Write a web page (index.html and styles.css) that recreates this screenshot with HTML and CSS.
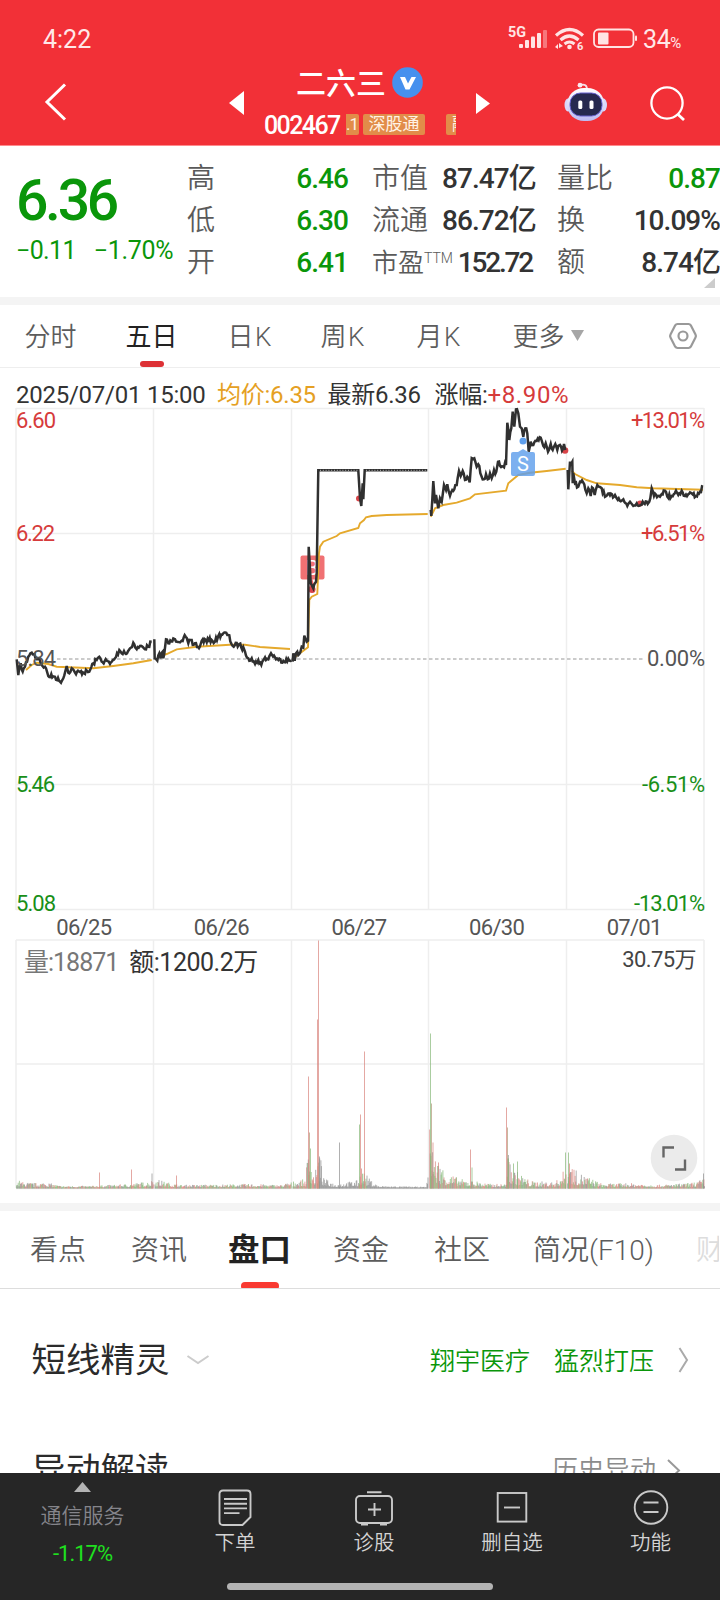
FILE: index.html
```html
<!DOCTYPE html>
<html lang="zh-CN">
<head>
<meta charset="utf-8">
<title>二六三 002467</title>
<link rel="stylesheet" href="styles.css">
</head>
<body>
<div class="screen">
  <header class="header">
    <div class="status">
      <span class="time">4:22</span>
      <svg class="status-icons" width="140" height="30" viewBox="500 24 140 30" fill="#ffe4e4">
        <text x="508" y="37" font-size="14" font-weight="700" textLength="18" lengthAdjust="spacingAndGlyphs">5G</text>
        <rect x="519" y="44" width="4" height="4" rx="1"/><rect x="525" y="40" width="4" height="8" rx="1"/><rect x="531" y="36.500" width="4" height="11.500" rx="1"/><rect x="537" y="33" width="4" height="15" rx="1"/><rect x="543" y="30" width="4" height="18" rx="1" opacity=".4"/>
        <g fill="none" stroke="#ffe4e4" stroke-width="3.200"><path d="M556 35.500Q569.500 23.500 583 35.500"/><path d="M560.500 40Q569.500 32 578.500 40"/><path d="M564.500 44Q569.500 40 574.500 44" stroke-width="3"/></g>
        <circle cx="569.500" cy="47" r="2.300"/>
        <path d="M555 47l3-3v5zM559 43v5l4-2z"/>
        <text x="577" y="50" font-size="11" font-weight="700">6</text>
        <rect x="594" y="29.500" width="39.500" height="17.500" rx="4.500" fill="none" stroke="#ffe4e4" stroke-width="1.800"/>
        <rect x="598" y="32.500" width="10.500" height="12" rx="1"/><rect x="635" y="35.500" width="2" height="5.500" rx="1"/>
      </svg>
      <span class="battery">34<small>%</small></span>
    </div>
    <div class="titlebar">
      <svg class="back" width="24" height="40" viewBox="0 0 24 40"><path d="M21 2.500L3 20l18 17.500" fill="none" stroke="#fff" stroke-width="3"/></svg>
      <svg class="prev" width="15" height="24" viewBox="0 0 15 24"><path d="M15 0v24L0 12z" fill="#fff"/></svg>
      <div class="title">
        <div class="name">二六三
          <svg width="31" height="31" viewBox="0 0 31 31"><circle cx="15.500" cy="15.500" r="15.300" fill="#4690ee"/><path d="M8 10h5l3 6.500 3.500-6.500h4.500l-6.500 12.500h-4z" fill="#fff"/></svg>
        </div>
        <div class="code"><b>002467</b><span class="tags"><i class="tag tag-first">.1</i><i class="tag tag-mid">深股通</i><i class="tag tag-last">融</i></span></div>
      </div>
      <svg class="next" width="14" height="21" viewBox="0 0 14 21"><path d="M0 0v21l14-10.500z" fill="#fff"/></svg>
      <svg class="robot" width="44" height="40" viewBox="0 0 44 40">
        <defs><linearGradient id="shell" x1="0" y1="0" x2="0" y2="1"><stop offset="0" stop-color="#fff"/><stop offset="1" stop-color="#bcbaf2"/></linearGradient></defs>
        <path d="M16 3c5-1 7 0 7 5" fill="none" stroke="#f6dfe8" stroke-width="1.800"/><circle cx="16" cy="3.200" r="2.400" fill="#fbe9ef"/>
        <ellipse cx="4" cy="23" rx="3.500" ry="6.500" fill="#d9d8fb"/><ellipse cx="39.500" cy="23" rx="3.500" ry="6.500" fill="#d9d8fb"/>
        <rect x="3" y="6" width="37.500" height="33" rx="17" fill="url(#shell)"/>
        <rect x="6" y="11" width="32" height="23" rx="10.500" fill="#26294f" stroke="#6560cf" stroke-width="1"/>
        <rect x="14.300" y="18.500" width="4" height="8.500" rx="1.500" fill="#fff"/><rect x="25.500" y="18.500" width="4" height="8.500" rx="1.500" fill="#fff"/>
      </svg>
      <svg class="search" width="36" height="36" viewBox="0 0 36 36" fill="none" stroke="#fff" stroke-width="2.300"><circle cx="17" cy="17" r="15.600"/><path d="M27.500 28l6.500 6" stroke-width="2.800"/></svg>
    </div>
  </header>

  <section class="quote">
    <div class="last">
      <div class="price">6.36</div>
      <div class="change"><span>−0.11</span><span>−1.70%</span></div>
    </div>
    <dl class="stats">
      <dt>高</dt><dd class="down">6.46</dd><dt>市值</dt><dd>87.47亿</dd><dt>量比</dt><dd class="down">0.87</dd>
      <dt>低</dt><dd class="down">6.30</dd><dt>流通</dt><dd>86.72亿</dd><dt>换</dt><dd>10.09%</dd>
      <dt>开</dt><dd class="down">6.41</dd><dt class="pe">市盈<sup>TTM</sup></dt><dd class="tight">152.72</dd><dt>额</dt><dd>8.74亿</dd>
    </dl>
    <svg class="corner" width="11" height="10"><path d="M11 0v10H0z" fill="#ccc"/></svg>
  </section>

  <nav class="periods">
    <span>分时</span><span class="on">五日</span><span>日K</span><span>周K</span><span>月K</span>
    <span>更多<svg class="caret" width="13" height="11"><path d="M0 0h13L6.500 11z" fill="#a6a6a6"/></svg></span>
    <svg width="30" height="28" viewBox="0 0 30 28" fill="none" stroke="#999" stroke-width="2.200"><path d="M9.500 2h11q1.500 0 2.300 1.300l4.700 9.200q.8 1.500 0 3l-4.700 9.200q-.8 1.300-2.300 1.300h-11q-1.500 0-2.300-1.300l-4.700-9.200q-.8-1.500 0-3l4.700-9.200q.8-1.300 2.300-1.300z"/><circle cx="15" cy="14" r="4.500"/></svg>
  </nav>

  <section class="chart">
    <div class="legend"><span>2025/07/01 15:00</span><span class="avg">均价:6.35</span><span>最新6.36</span><span>涨幅:<em>+8.90%</em></span></div>
    <svg class="plot" width="720" height="506" viewBox="0 406 720 506">
      <path class="grid" d="M16 408.500H704M16 533.500H704M16 784.500H704M16 909.500H704M16 408V910M153.500 408V910M291.500 408V910M428.500 408V910M566.500 408V910M704 408V910"/>
      <path d="M57 659H645" stroke="#bbb" stroke-width="1.500" stroke-dasharray="3.500 2.500"/>
      <rect x="300.500" y="555.500" width="24" height="24" rx="2" fill="#ee6264" opacity=".9"/>
      <text class="mark" x="306" y="575">B</text>
      <path d="M309 588l3-10 3 10z" fill="#ee6264"/>
      <g fill="#d94449"><circle cx="312" cy="589.500" r="3.500"/><circle cx="359" cy="498.500" r="3"/><circle cx="565" cy="450.500" r="3.300"/><circle cx="640" cy="503.500" r="3"/></g>
      <g id="average"></g>
      <g id="price"></g>
      <path d="M320 470.300H358M366 470.300H427" stroke="#bbb" stroke-width="1" stroke-dasharray="1 1.800"/>
      <circle cx="523" cy="441" r="3.500" fill="#5f9fec"/>
      <path d="M513 452h5l5-3 5 3h5q2 0 2 2v20q0 2-2 2h-20q-2 0-2-2v-20q0-2 2-2z" fill="#5f9fec" opacity=".82"/>
      <text class="mark" x="523" y="471" text-anchor="middle">S</text>
      <g class="axis">
        <g fill="#d63b3b"><text x="16" y="428" textLength="40">6.60</text><text x="16" y="540.500" textLength="39">6.22</text><text x="631" y="428" textLength="74">+13.01%</text><text x="641" y="540.500" textLength="64">+6.51%</text></g>
        <g fill="#555"><text x="16" y="666" textLength="40">5.84</text><text x="647" y="666" textLength="58">0.00%</text></g>
        <g fill="#188f18"><text x="16" y="791.500" textLength="39">5.46</text><text x="16" y="911" textLength="40">5.08</text><text x="642" y="791.500" textLength="63">-6.51%</text><text x="634" y="911" textLength="71">-13.01%</text></g>
      </g>
    </svg>
    <div class="dates"><span>06/25</span><span>06/26</span><span>06/27</span><span>06/30</span><span>07/01</span></div>
    <div class="volume">
      <svg width="720" height="252" viewBox="0 938 720 252">
        <path class="grid" d="M16 940H704M16 1064H704M16 1188.500H704M16 940V1188M153.500 940V1188M291.500 940V1188M428.500 940V1188M566.500 940V1188M704 940V1188"/>
        <g id="bars"></g>
      </svg>
      <div class="volume-legend"><span class="dim">量:18871</span><span>额:1200.2万</span><small>30.75万</small></div>
      <svg class="expand" width="48" height="48" viewBox="0 0 48 48"><circle cx="24" cy="24" r="23.300" fill="#ebebeb"/><path d="M13.500 23.500V13.500H24M35 25.500v10H25" fill="none" stroke="#666" stroke-width="2.400"/></svg>
    </div>
  </section>

  <nav class="sections">
    <span>看点</span><span>资讯</span><span class="on">盘口</span><span>资金</span><span>社区</span><span>简况(F10)</span><span class="faded">财</span>
  </nav>

  <section class="row wizard">
    <h2>短线精灵</h2>
    <svg class="fold" width="24" height="12" viewBox="0 0 24 12"><path d="M1.500 2L12 9 22.500 2" fill="none" stroke="#ccc" stroke-width="2"/></svg>
    <span class="alert">翔宇医疗</span><span class="alert">猛烈打压</span>
    <svg class="go" width="11" height="26" viewBox="0 0 11 26"><path d="M1.500 1L9 13 1.500 25" fill="none" stroke="#aaa" stroke-width="2"/></svg>
  </section>
  <section class="row moves">
    <h2>异动解读</h2><span class="history">历史异动</span>
    <svg width="14" height="24" viewBox="0 0 14 24"><path d="M1 1l11 10.500L1 22" fill="none" stroke="#999" stroke-width="2"/></svg>
  </section>

  <footer class="bottom">
    <div class="items">
      <div class="sector"><svg width="17" height="10"><path d="M0 10L8.500 0 17 10z" fill="#b3b3b3"/></svg><span>通信服务</span><b>-1.17%</b></div>
      <div class="item"><svg width="40" height="40" viewBox="0 0 40 40"><path d="M8 3.500h24q3.500 0 3.500 3.500v23l-8 8H8q-3.500 0-3.500-3.500V7q0-3.500 3.500-3.500z"/><path d="M9 12h23M9 16.700h23M9 21.400h23M9 26.100h15.500"/></svg><span>下单</span></div>
      <div class="item"><svg width="40" height="40" viewBox="0 0 40 40"><rect x="2" y="9" width="36" height="27" rx="4"/><path d="M13 5.200h14.500M20.500 16v13M14 22.500h13M7 37.500h7M26 37.500h7"/></svg><span>诊股</span></div>
      <div class="item"><svg width="40" height="40" viewBox="0 0 40 40"><rect x="5.700" y="6" width="28.600" height="28.600"/><path d="M12 20.500h16"/></svg><span>删自选</span></div>
      <div class="item"><svg width="40" height="40" viewBox="0 0 40 40"><circle cx="20" cy="20.500" r="16.300"/><path d="M12.500 15.500h15M12.500 25h15"/></svg><span>功能</span></div>
    </div>
    <div class="home"></div>
  </footer>
</div>
<script src="chart.js"></script>
</body>
</html>
```

FILE: styles.css
```css
* { box-sizing: border-box; }
body { margin: 0; background: #fff; color: #333; font-family: Roboto, "Noto Sans CJK SC", sans-serif; }
svg { display: block; flex: none; }
.screen { width: 720px; height: 1600px; overflow: hidden; display: flex; flex-direction: column; }
.screen > * { flex: none; }

.header { height: 146px; background: #f23037; border-bottom: 1px solid #ff8a8d; color: #fff; }
.status { display: flex; height: 64px; padding: 24px 0 10px 43px; color: #ffe8e8; line-height: 31px; }
.time { width: 457px; font-size: 25px; letter-spacing: 0; }
.battery { margin-left: 3px; font-size: 25px; letter-spacing: -.4px; white-space: nowrap; }
.battery small { font-size: 15px; }
.titlebar { display: flex; align-items: flex-start; height: 81px; }
.back { margin: 18px 0 0 44px; }
.prev { margin: 27px 0 0 161px; }
.title { width: 232px; padding-left: 20px; }
.name { display: flex; gap: 6px; margin-left: 32px; height: 40px; align-items: center; font-size: 30px; font-weight: 500; line-height: 40px; }
.name svg { margin-top: -3px; }
.code { display: flex; height: 24px; margin-top: 9px; line-height: 26px; }
.code b { width: 82px; font-size: 25px; font-weight: 500; letter-spacing: -1.6px; }
.tags { display: flex; width: 110px; overflow: hidden; height: 22px; margin-top: 1px; }
.tag { background: #e28c49; color: #fff3e6; font-style: normal; font-size: 17px; line-height: 20px; height: 21px; border-radius: 2px; white-space: nowrap; flex: none; }
.tag-first { width: 13px; border-radius: 0 2px 2px 0; letter-spacing: -1px; overflow: hidden; }
.tag-mid { width: 62px; margin-left: 4px; text-align: center; }
.tag-last { width: 24px; margin-left: 21px; padding-left: 6px; }
.next { margin: 29px 0 0; }
.robot { margin: 18px 0 0 74px; }
.search { margin: 22px 0 0 42px; }

.quote { position: relative; display: flex; height: 159px; border-bottom: 8px solid #f4f4f4; }
.last { width: 187px; padding: 20px 0 0 16px; color: #0a960a; white-space: nowrap; }
.price { font-size: 57px; line-height: 69px; font-weight: 500; letter-spacing: -3.300px; }
.change { display: flex; gap: 18px; font-size: 25px; line-height: 30px; letter-spacing: -.65px; margin-top: 1px; }
.change span + span { letter-spacing: -.3px; }
.stats { display: grid; grid-template-columns: 82px 79px 24px 70px 90px 25px 70px 93px; grid-template-rows: repeat(3, 42px); margin: 12px 0 0; width: 533px; line-height: 42px; font-size: 28px; white-space: nowrap; }
.stats dt { color: #5a5a5a; font-weight: 350; }
.stats dd { margin: 0; text-align: right; font-weight: 500; letter-spacing: -.950px; }
.stats dd.tight { letter-spacing: -2.200px; }
.stats dt:nth-of-type(3n+1) { grid-column: 1; }
.stats dd:nth-of-type(3n+1) { grid-column: 2; }
.stats dt:nth-of-type(3n+2) { grid-column: 4; }
.stats dd:nth-of-type(3n+2) { grid-column: 5; }
.stats dt:nth-of-type(3n) { grid-column: 7; }
.stats dd:nth-of-type(3n) { grid-column: 8; }
.stats .down { color: #0a960a; }
.stats .pe { font-size: 26px; }
.pe sup { font-size: 14px; line-height: 0; vertical-align: 9px; }
.corner { position: absolute; right: 5px; bottom: 9px; }

.periods { display: grid; grid-template-columns: 101px 102px 93px 96px 96px 155px 30px; padding-left: 24.500px; height: 63px; align-items: center; border-bottom: 1px solid #eee; font-size: 26px; font-weight: 350; color: #5c5c5c; }
.periods span { display: flex; align-items: center; gap: 6px; height: 62px; padding-bottom: 4px; }
.periods .caret { margin-top: 2px; }
.periods span:nth-child(3), .periods span:nth-child(4), .periods span:nth-child(5) { letter-spacing: 1.500px; }
.periods .on { color: #222; font-weight: 400; position: relative; }
.periods .on::after { content: ""; position: absolute; left: 14px; bottom: 0; width: 24px; height: 6px; border-radius: 3px; background: #dd3135; }

.legend { display: grid; grid-template-columns: 201px 110.500px 107px auto; padding: 9px 0 0 16px; height: 38px; line-height: 37px; font-size: 24px; letter-spacing: -.25px; white-space: nowrap; }
.legend .avg { color: #e5a023; }
.legend em { font-style: normal; color: #d63b3b; letter-spacing: .6px; }
.plot { overflow: visible; }
.grid { fill: none; stroke: #eee; stroke-width: 1.500; }
.mark { fill: #fff; font-size: 20px; }
.axis { font-size: 22px; }
.axis text { font-family: Roboto, sans-serif; }
#price path { fill: none; stroke: #303030; stroke-width: 2.500; }
#average path { fill: none; stroke: #e5a92c; stroke-width: 1.900; }
.dates { display: grid; grid-template-columns: repeat(5, 137.600px); padding-left: 15px; height: 26px; line-height: 32px; font-size: 22px; letter-spacing: -.7px; color: #555; text-align: center; }
.volume { position: relative; height: 273px; border-bottom: 8px solid #f4f4f4; }
.volume-legend { position: absolute; left: 24px; right: 24px; top: 7px; display: flex; gap: 11px; font-size: 25px; line-height: 36px; letter-spacing: -.8px; }
.volume-legend .dim { color: #777; letter-spacing: -1px; }
.volume-legend span + span { letter-spacing: -.5px; }
.volume-legend small { margin-left: auto; margin-top: -3px; font-size: 22px; color: #444; letter-spacing: -.6px; }
.expand { position: absolute; right: 22px; bottom: 21px; }

.sections { display: grid; grid-template-columns: 101px 97px 105px 101px 99px 163px 23px; padding-left: 30px; height: 78px; border-bottom: 1px solid #ddd; line-height: 79px; font-size: 28px; font-weight: 350; color: #5c5c5c; white-space: nowrap; overflow: hidden; }
.sections .on { position: relative; color: #222; font-size: 31.500px; font-weight: 700; }
.sections .on::after { content: ""; position: absolute; left: 13px; bottom: 0; width: 38px; height: 8px; border-radius: 4px; background: #f93a32; }
.sections .faded { color: #ddd; overflow: hidden; }

.row { display: flex; align-items: center; padding-left: 31.500px; }
.row h2 { margin: 0; font-size: 34.500px; font-weight: 400; color: #2b2b2b; line-height: 50px; }
.wizard { height: 142px; }
.fold { margin-left: 16px; margin-right: auto; }
.alert { font-size: 25px; color: #0a960a; margin: -3px 24px 0 0; font-weight: 350; }
.go { margin-right: 31px; }
.moves { height: 42px; align-items: flex-start; overflow: hidden; padding-top: 14px; padding-right: 39px; line-height: 50px; }
.moves svg { margin-top: 14px; }
.history { margin-left: auto; margin-right: 11px; color: #8c8c8c; font-size: 26px; font-weight: 350; }

.bottom { position: relative; height: 127px; margin-top: 0; background: #262626; color: #d4d4d4; }
.items { display: grid; grid-template-columns: 165px 140px 138px 138px 139px; height: 110px; }
.items > div { display: flex; flex-direction: column; align-items: center; }
.sector svg { margin-top: 9px; }
.sector span { margin-top: 8px; font-size: 21px; line-height: 32px; color: #85858b; font-weight: 350; }
.sector b { margin-top: 7px; font-size: 22px; line-height: 30px; font-weight: 400; color: #1fe01f; letter-spacing: -1px; }
.item { padding-top: 14px; }
.item svg { fill: none; stroke: #c9c9c9; stroke-width: 1.900; }
.item span { margin-top: 1px; font-size: 20.500px; line-height: 30px; font-weight: 350; }
.home { width: 266px; height: 7px; border-radius: 4px; background: #b3b3b3; margin-left: 227px; }
```

FILE: chart.js
```js
// Small deterministic generator so the minute-level detail is stable.
let seed = 7;
const rand = () => (seed = (seed * 16807) % 2147483647) / 2147483647;
const NS = "http://www.w3.org/2000/svg";
const add = (id, tag, attrs) => {
  const el = document.createElementNS(NS, tag);
  for (const k in attrs) el.setAttribute(k, attrs[k]);
  document.getElementById(id).appendChild(el);
};
const parse = s => s.split(" ").map(p => p.split(",").map(Number));

// Points are stored in thirds of a pixel: [x offset, y offset, points].
const price = [
  [0, 0, "50,868 55,915 62,880 68,905 75,890 85,860 95,848 103,852 110,868 118,865 125,885 135,890 145,918 165,920 180,935 190,925 200,888 205,908 215,895 225,908 268,905 280,880 290,870 298,860 305,875 320,872 330,882 345,865 358,840 365,850 372,843 378,852 390,835 400,818 410,838 420,828 432,835 445,830 455,815"],
  [0, 0, "463,808 464,865 472,872 478,850 482,865 488,845 490,865 498,808 505,820 525,808 545,812 557,800 565,820 572,810 578,825 585,820 597,835 605,812 635,810 645,815 655,798 670,790 685,795 698,828 718,822 735,845 745,865 755,865 765,882 775,870 784,885 795,862 805,868 813,850 825,862 835,870 875,872"],
  [0, 0, "878,875 880,850 884,872 888,850 892,845 895,855 905,830 910,833 913,797 920,815 924,812 926,530 932,640 940,655 948,635 950,610 955,301 1075,301 1080,385 1084,408 1088,340 1090,388 1094,301 1282,301"],
  [1260, 0, "32,420 34,438 40,333 45,400 48,375 55,415 60,385 65,395 72,345 78,360 82,343 90,377 97,360 103,358 110,345 117,303 122,318 128,303 135,330 142,320 149,337 155,265 163,265 170,290 175,283 185,320 192,328 198,312 203,328 210,310 215,325 222,300 226,312 234,275 240,288 258,285 262,158 268,210 274,175 278,125 283,170 288,118 295,130 300,170 305,175 310,200 316,175 322,190 326,245 332,215 340,225 350,213 362,203 370,228 377,220 384,245 392,222 398,240 406,222 412,240 420,225 426,242 432,222 436,240"],
  [1260, 0, "443,300 445,358 450,275 457,275 458,340 460,310 465,340 475,350 480,335 490,338 500,370 505,355 512,378 516,352 524,375 532,345 545,355 555,380 585,375 590,385 610,388 622,408 630,395 640,408 650,400 656,408 668,395 688,395 695,355 702,378 725,372 735,362 742,380 755,378 768,362 775,375 785,362 795,378 815,370 828,378 840,365 849,350"]
];
const average = [
  [0, 0, "78,900 95,885 110,878 145,882 170,890 280,895 340,888 400,880 455,870"],
  [0, 0, "480,858 500,852 530,838 590,830 690,824 735,824 780,831 870,837"],
  [0, 0, "880,865 900,850 924,832 928,690 935,680 952,672 957,550 960,530 970,515 1010,498 1020,490 1075,474 1080,460 1092,450 1098,442 1115,438 1160,435 1283,432"],
  [1260, 0, "32,440 45,415 70,405 110,398 150,385 165,373 258,362 265,340 295,315 330,308 380,303 437,296"],
  [1260, 0, "455,302 465,312 500,330 530,340 600,345 650,352 700,355 849,359"]
];
const line = (id, [ox, oy, s], jitter) => {
  const pts = parse(s), out = [pts[0]];
  for (let i = 1; i < pts.length; i++) {
    const [x0, y0] = pts[i - 1], [x1, y1] = pts[i];
    const flat = y0 === 301 && y1 === 301;
    for (let x = x0 + 3; jitter && !flat && x < x1 - 2; x += 3)
      out.push([x, y0 + (y1 - y0) * (x - x0) / (x1 - x0) + (rand() - .5) * jitter]);
    out.push([x1, y1]);
  }
  add(id, "path", { d: "M" + out.map(([x, y]) => ((x + ox) / 3).toFixed(1) + " " + (370 + (y + oy) / 3).toFixed(1)).join("L") });
};
average.forEach(a => line("average", a, 0));
price.forEach(p => line("price", p, 15));

// Volume bars: typical height by x, then individual spikes.
const R = "#d9837c", G = "#86b878", K = "#8f8f8f", T = "#b09a78";
const level = parse("16,9 22,6 35,5 45,6 60,2 90,2 130,4 150,7 154,10 165,6 180,3 250,4 280,3 290,6 305,9 308,45 313,14 316,20 319,40 323,10 335,4 358,8 361,20 370,8 378,2 426,1 430,75 434,32 440,24 447,15 460,9 475,7 490,4 505,4 508,38 512,20 530,7 555,6 565,20 568,30 576,17 590,10 602,4 625,5 660,3 690,5 703,9");
const height = x => {
  let i = 1;
  while (i < level.length - 1 && level[i][0] < x) i++;
  const [x0, y0] = level[i - 1], [x1, y1] = level[i];
  return y0 + (y1 - y0) * (x - x0) / (x1 - x0);
};
const bar = (x, h, c) => add("bars", "rect", { x: x, y: (1188.5 - h).toFixed(1), width: 1, height: h.toFixed(1), fill: c, opacity: .7 });
for (let x = 16; x < 704; x += .57) {
  if ([153, 291, 428, 566].includes(Math.floor(x))) continue;
  const h = height(x) * (.15 + .85 * Math.pow(rand(), 1.6)) + .7;
  const gray = (x > 319 && x < 358) || (x > 366 && x < 428);
  const r = rand();
  bar(x.toFixed(1), h, gray || r < .25 ? K : r < .63 ? R : G);
}
[[99, 16, R], [131, 19, R], [151.500, 15, K], [176, 13, R], [308, 112, R], [309, 56, T], [310, 40, G], [317, 169, R], [318, 248, R], [319, 32, K], [339, 46, K],
 [359, 64, G], [360, 74, R], [361, 20, R], [364, 137, R], [430, 155, G], [431, 85, T], [432.500, 46, R], [438, 26, R], [470, 39, R], [471.500, 21, G],
 [506, 81, R], [507, 61, T], [508, 30, G], [513, 25, G], [517, 27, G], [565, 36, G], [568, 36, G], [569, 25, R], [703, 15, K]
].forEach(b => bar(...b));
```
